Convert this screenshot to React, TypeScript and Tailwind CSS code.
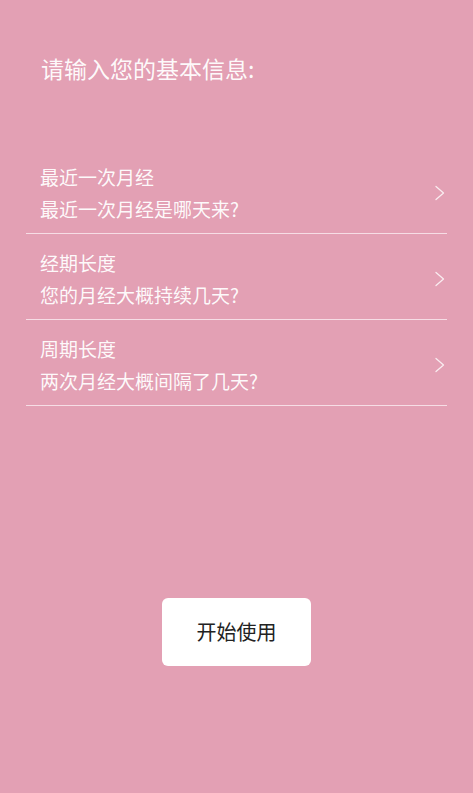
const rows = [
  { title: "最近一次月经", sub: "最近一次月经是哪天来?" },
  { title: "经期长度", sub: "您的月经大概持续几天?" },
  { title: "周期长度", sub: "两次月经大概间隔了几天?" },
];

function Chevron() {
  return (
    <svg width="12" height="16" viewBox="0 0 12 16" fill="none" className="shrink-0">
      <path d="M2 1.5 L9.5 8 L2 14.5" stroke="rgba(255,255,255,0.8)" strokeWidth="1.3" strokeLinecap="round" strokeLinejoin="round" />
    </svg>
  );
}

export default function App() {
  return (
    <main
      className="min-h-screen bg-[#e3a0b4] text-white flex flex-col"
      style={{ fontFamily: '"Noto Sans CJK SC", "Noto Sans", sans-serif' }}
    >
      <h1 className="pt-[53px] pl-[41px] text-[23px] leading-[30px] font-normal text-white/95">
        请输入您的基本信息:
      </h1>

      <section className="mt-[65px] mx-[26px] w-[421px]">
        {rows.map(({ title, sub }) => (
          <div
            key={title}
            className="flex items-center justify-between pt-[13px] pb-[8px] pl-[14px] pr-[1px] border-b border-[#f6dde5]"
          >
            <div className="text-[19px] leading-[32px] text-white/95">
              <p>{title}</p>
              <p>{sub}</p>
            </div>
            <Chevron />
          </div>
        ))}
      </section>

      <div className="mt-[192px] flex justify-center">
        <button className="w-[149px] h-[68px] bg-white rounded-[6px] text-[20px] text-[#222]">
          开始使用
        </button>
      </div>
    </main>
  );
}
